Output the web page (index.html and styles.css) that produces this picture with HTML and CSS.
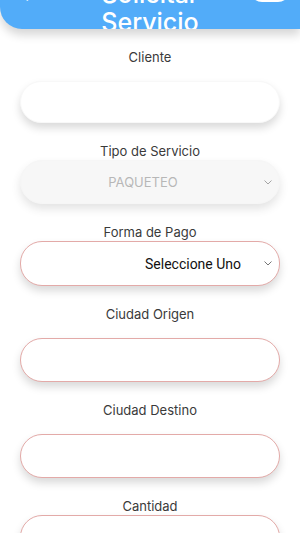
FILE: index.html
```html
<!DOCTYPE html>
<html>

<head>
    <meta charset="UTF-8">
    <title>Solicitar Servicio</title>
    <link rel="stylesheet" href="styles.css">
</head>

<body>
    <div class="header">
        <span class="back">&#8592;</span>
        <div class="title">Solicitar<br>Servicio</div>
        <span class="pill"></span>
    </div>

    <div class="form">
        <div class="field">
            <label for="cliente">Cliente</label>
            <input type="text" id="cliente" class="input plain">
        </div>

        <div class="field tight">
            <label for="tipo">Tipo de Servicio</label>
            <div class="select-wrap">
                <select id="tipo" class="select disabled" disabled>
                    <option>PAQUETEO</option>
                </select>
                <svg class="chevron" width="8" height="5" viewBox="0 0 8 5">
                    <path d="M0.5 0.5 L4 4 L7.5 0.5" fill="none" stroke="#9a9a9a" stroke-width="0.9" />
                </svg>
            </div>
        </div>

        <div class="field tight">
            <label for="pago">Forma de Pago</label>
            <div class="select-wrap">
                <select id="pago" class="select pay">
                    <option>Seleccione Uno</option>
                </select>
                <svg class="chevron" width="8" height="5" viewBox="0 0 8 5">
                    <path d="M0.5 0.5 L4 4 L7.5 0.5" fill="none" stroke="#666" stroke-width="0.9" />
                </svg>
            </div>
        </div>

        <div class="field">
            <label for="origen">Ciudad Origen</label>
            <input type="text" id="origen" class="input">
        </div>

        <div class="field">
            <label for="destino">Ciudad Destino</label>
            <input type="text" id="destino" class="input">
        </div>

        <div class="field tight">
            <label for="cantidad">Cantidad</label>
            <input type="number" id="cantidad" class="input">
        </div>
    </div>
</body>

</html>
```

FILE: styles.css
```css
body {
    margin: 0;
    background: #fff;
    font-family: Inter, "Noto Sans", sans-serif;
    overflow: hidden;
}

.header {
    position: relative;
    height: 61px;
    margin-top: -32px;
    padding-top: 12px;
    box-sizing: border-box;
    background: #52acf9;
    border-radius: 0 0 0 22px;
    box-shadow: 0 6px 10px rgba(0, 0, 0, 0.16);
    overflow: hidden;
    color: #fff;
}

.title {
    text-align: center;
    font-size: 25px;
    line-height: 28px;
    font-weight: 500;
}

.back {
    position: absolute;
    left: 18px;
    top: 14px;
    font-size: 22px;
    line-height: 22px;
}

.pill {
    position: absolute;
    left: 250px;
    top: 10px;
    width: 40px;
    height: 24px;
    border-radius: 12px;
    background: #fff;
}

.form {
    padding: 0 20px;
}

.field {
    display: flex;
    flex-direction: column;
    margin-top: 20px;
}

.field label {
    text-align: center;
    font-size: 13px;
    line-height: 16px;
    color: #3a3a3a;
    margin-bottom: 16px;
}

.field.tight label {
    margin-bottom: 1px;
}

.input {
    height: 44px;
    border: 1px solid #e3aaa8;
    border-radius: 22px;
    box-sizing: border-box;
    background: #fff;
    box-shadow: 0 5px 8px rgba(0, 0, 0, 0.15);
    outline: none;
    font-size: 14px;
    padding: 0 16px;
}

.input.plain {
    height: 42px;
    border-color: #f8f8f8;
}

.select-wrap {
    position: relative;
}

.select {
    width: 100%;
    height: 44px;
    appearance: none;
    -webkit-appearance: none;
    border-radius: 22px;
    box-sizing: border-box;
    box-shadow: 0 5px 8px rgba(0, 0, 0, 0.15);
    outline: none;
}

.select.disabled {
    border: 1px solid #f3f3f3;
    background: #f4f4f4;
    color: #9a9a9a;
    font-family: Inter, "Noto Sans", sans-serif;
    font-size: 13px;
    text-align: center;
    text-align-last: center;
    padding: 0 14px 0 0;
}

.select.pay {
    height: 45px;
    border: 1px solid #e3aaa8;
    background: #fff;
    color: #111;
    font-family: Roboto, "Liberation Sans", sans-serif;
    font-size: 14px;
    padding: 0 0 0 124px;
}

.chevron {
    position: absolute;
    right: 8px;
    top: 20px;
}
```
